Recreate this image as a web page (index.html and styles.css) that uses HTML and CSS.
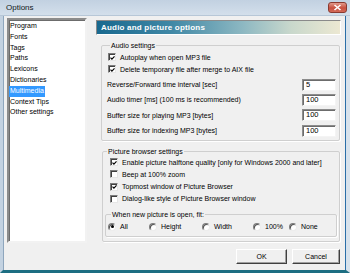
FILE: index.html
```html
<!DOCTYPE html>
<html>
<head>
<meta charset="utf-8">
<link rel="stylesheet" href="styles.css">
</head>
<body>
<div class="window">
  <div class="titlebar">
    <span class="title">Options</span>
    <span class="close"><svg width="9" height="7" viewBox="0 0 9 7"><path d="M1.5 1 L7.5 6 M7.5 1 L1.5 6" stroke="#fff" stroke-width="1.6" fill="none"/></svg></span>
  </div>
  <div class="client">
    <div class="main">
      <ul class="list">
        <li><span>Program</span></li>
        <li><span>Fonts</span></li>
        <li><span>Tags</span></li>
        <li><span>Paths</span></li>
        <li><span>Lexicons</span></li>
        <li><span>Dictionaries</span></li>
        <li><span class="sel">Multimedia</span></li>
        <li><span>Context Tips</span></li>
        <li><span>Other settings</span></li>
      </ul>
      <div class="panel">
        <div class="banner">Audio and picture options</div>
        <fieldset class="group audio">
          <legend>Audio settings</legend>
          <div class="checks">
            <div class="check"><span class="cb"><svg viewBox="0 0 6 6" width="6" height="6"><polyline points="0.6,2.6 2.3,4.4 5.4,1.1" stroke="#000" stroke-width="1.4" fill="none"/></svg></span>Autoplay when open MP3 file</div>
            <div class="check"><span class="cb"><svg viewBox="0 0 6 6" width="6" height="6"><polyline points="0.6,2.6 2.3,4.4 5.4,1.1" stroke="#000" stroke-width="1.4" fill="none"/></svg></span>Delete temporary file after merge to AIX file</div>
          </div>
          <div class="fields">
            <div class="field"><span>Reverse/Forward time interval [sec]</span><span class="input">5</span></div>
            <div class="field"><span>Audio timer [ms] (100 ms is recommended)</span><span class="input">100</span></div>
            <div class="field"><span>Buffer size for playing MP3 [bytes]</span><span class="input">100</span></div>
            <div class="field"><span>Buffer size for indexing MP3 [bytes]</span><span class="input">100</span></div>
          </div>
        </fieldset>
        <fieldset class="group picture">
          <legend>Picture browser settings</legend>
          <div class="checks pchecks">
            <div class="check"><span class="cb"><svg viewBox="0 0 6 6" width="6" height="6"><polyline points="0.6,2.6 2.3,4.4 5.4,1.1" stroke="#000" stroke-width="1.4" fill="none"/></svg></span>Enable picture halftone quality [only for Windows 2000 and later]</div>
            <div class="check"><span class="cb"></span>Beep at 100% zoom</div>
            <div class="check"><span class="cb"><svg viewBox="0 0 6 6" width="6" height="6"><polyline points="0.6,2.6 2.3,4.4 5.4,1.1" stroke="#000" stroke-width="1.4" fill="none"/></svg></span>Topmost window of Picture Browser</div>
            <div class="check"><span class="cb"></span>Dialog-like style of Picture Browser window</div>
          </div>
          <fieldset class="group fit">
            <legend>When new picture is open, fit:</legend>
            <div class="radios">
              <div class="radio"><span class="rb on"></span>All</div>
              <div class="radio"><span class="rb"></span>Height</div>
              <div class="radio"><span class="rb"></span>Width</div>
              <div class="radio"><span class="rb"></span>100%</div>
              <div class="radio"><span class="rb"></span>None</div>
            </div>
          </fieldset>
        </fieldset>
      </div>
    </div>
    <div class="buttons">
      <span class="btn ok">OK</span>
      <span class="btn cancel">Cancel</span>
    </div>
  </div>
</div>
</body>
</html>
```
FILE: styles.css
```css
* { box-sizing: border-box; }
html, body { margin: 0; padding: 0; }
body {
  width: 350px;
  height: 273px;
  overflow: hidden;
  font-family: "Liberation Sans", Arial, sans-serif;
  font-size: 7px;
  color: #000;
  background: #f0f0f0;
}
.window {
  width: 350px;
  height: 273px;
  display: flex;
  flex-direction: column;
  background: #f0f0f0;
  border-left: 3px solid #c3d2e1;
  border-right: 4px solid #d7e2ec;
  border-bottom: 3px solid #1d6e82;
  box-shadow: inset 1px 0 #8ea6bd, inset -1px 0 #2a6ea8;
}
.titlebar {
  height: 16px;
  flex: none;
  display: flex;
  align-items: center;
  justify-content: space-between;
  padding: 0 0 0 3px;
  margin-left: -3px;
  margin-right: -4px;
  padding-left: 6px;
  padding-right: 3px;
  background: linear-gradient(#c2d1e1, #d3dfeb);
  border-bottom: 1px solid #b7c7d7;
}
.title { font-size: 8px; color: #101820; }
.close {
  width: 19px;
  height: 11px;
  margin-top: -1px;
  border: 1px solid #8a3a30;
  border-radius: 3px;
  background: linear-gradient(#e29a8c, #c8503f 55%, #d46a58);
  display: flex;
  align-items: center;
  justify-content: center;
}
.client {
  flex: 1;
  display: flex;
  flex-direction: column;
  padding: 2px 5px 0 4px;
}
.main {
  display: flex;
  gap: 9px;
  height: 225px;
}
.list {
  width: 80px;
  height: 225px;
  margin: 0;
  padding: 1px 0 0 0;
  list-style: none;
  background: #fff;
  border: 2px solid;
  border-color: #8c8c8c #f2f2f2 #f2f2f2 #8c8c8c;
  box-shadow: inset 1px 1px #6c6c6c;
}
.list li { height: 10.8px; line-height: 10.8px; }
.list li span { display: inline-block; padding: 0 1px; }
.list li span.sel { background: #3399ff; color: #fff; }
.panel {
  flex: 1;
  display: flex;
  flex-direction: column;
  padding-top: 2px;
}
.banner {
  height: 15px;
  flex: none;
  padding-left: 4px;
  line-height: 13px;
  font-size: 8px;
  font-weight: bold;
  color: #fff;
  letter-spacing: 0.2px;
  background: linear-gradient(90deg, #19698f 0%, #3f87a5 30%, #8db8c2 60%, #c9d8cc 80%, #ece8d2 100%);
  border: 1px solid;
  border-color: #8a8a8a #fff #fff #8a8a8a;
}
.group {
  margin: 0;
  padding: 0;
  min-width: 0;
  border: 1px solid #cfcfcf;
  border-radius: 2px;
  box-shadow: 1px 1px #fff;
}
.group legend {
  margin-left: 2px;
  padding: 0 1px;
  line-height: 9px;
}
.audio { margin: 6px 1px 0 5px; padding: 1px 3px 2px 6px; }
.checks .check {
  display: flex;
  align-items: center;
  height: 12px;
}
.cb {
  width: 8px;
  height: 8px;
  flex: none;
  margin-right: 4px;
  background: #fff;
  border: 1px solid;
  border-color: #7c7c7c #e6e6e6 #e6e6e6 #7c7c7c;
  box-shadow: inset 1px 1px #404040;
  display: flex;
  align-items: center;
  justify-content: center;
  padding: 1px 0 0 1px;
}
.cb svg { display: block; }
.fields { margin-top: 2px; }
.field {
  height: 15.3px;
  display: flex;
  align-items: center;
  justify-content: space-between;
  margin-left: -1px;
}
.input {
  width: 34px;
  height: 12px;
  background: #fff;
  border: 1px solid;
  border-color: #8c8c8c #f4f4f4 #f4f4f4 #8c8c8c;
  box-shadow: inset 1px 1px #6c6c6c;
  padding-left: 3px;
  line-height: 10px;
  font-size: 7.5px;
}
.picture { margin: 6px 1px 0 6px; padding: 0 2px 4px 2px; }
.pchecks { padding-left: 5px; }
.pchecks .check { height: 12.2px; }
.fit { margin-top: 5px; padding: 2px 2px 3px 2px; }
.fit legend { margin-left: 3px; }
.radios {
  display: grid;
  grid-template-columns: 41px 53px 51px 36px auto;
  height: 12px;
  align-items: center;
}
.radio { display: flex; align-items: center; }
.rb {
  width: 8px;
  height: 8px;
  border-radius: 50%;
  margin-right: 4px;
  background: #fff;
  border: 1px solid;
  border-color: #7c7c7c #ececec #ececec #7c7c7c;
  box-shadow: inset 1px 1px #505050;
  display: flex;
  align-items: center;
  justify-content: center;
}
.rb.on::after {
  content: "";
  width: 3px;
  height: 3px;
  border-radius: 50%;
  background: #000;
}
.buttons {
  display: flex;
  justify-content: flex-end;
  gap: 5px;
  margin-top: 6px;
  margin-right: 1px;
}
.btn {
  height: 15px;
  display: flex;
  align-items: center;
  justify-content: center;
  background: #f0f0f0;
  border: 1px solid;
  border-color: #fff #404040 #404040 #fff;
  box-shadow: inset -1px -1px #a0a0a0;
  font-size: 7px;
}
.ok { width: 51px; }
.cancel { width: 48px; }
```
